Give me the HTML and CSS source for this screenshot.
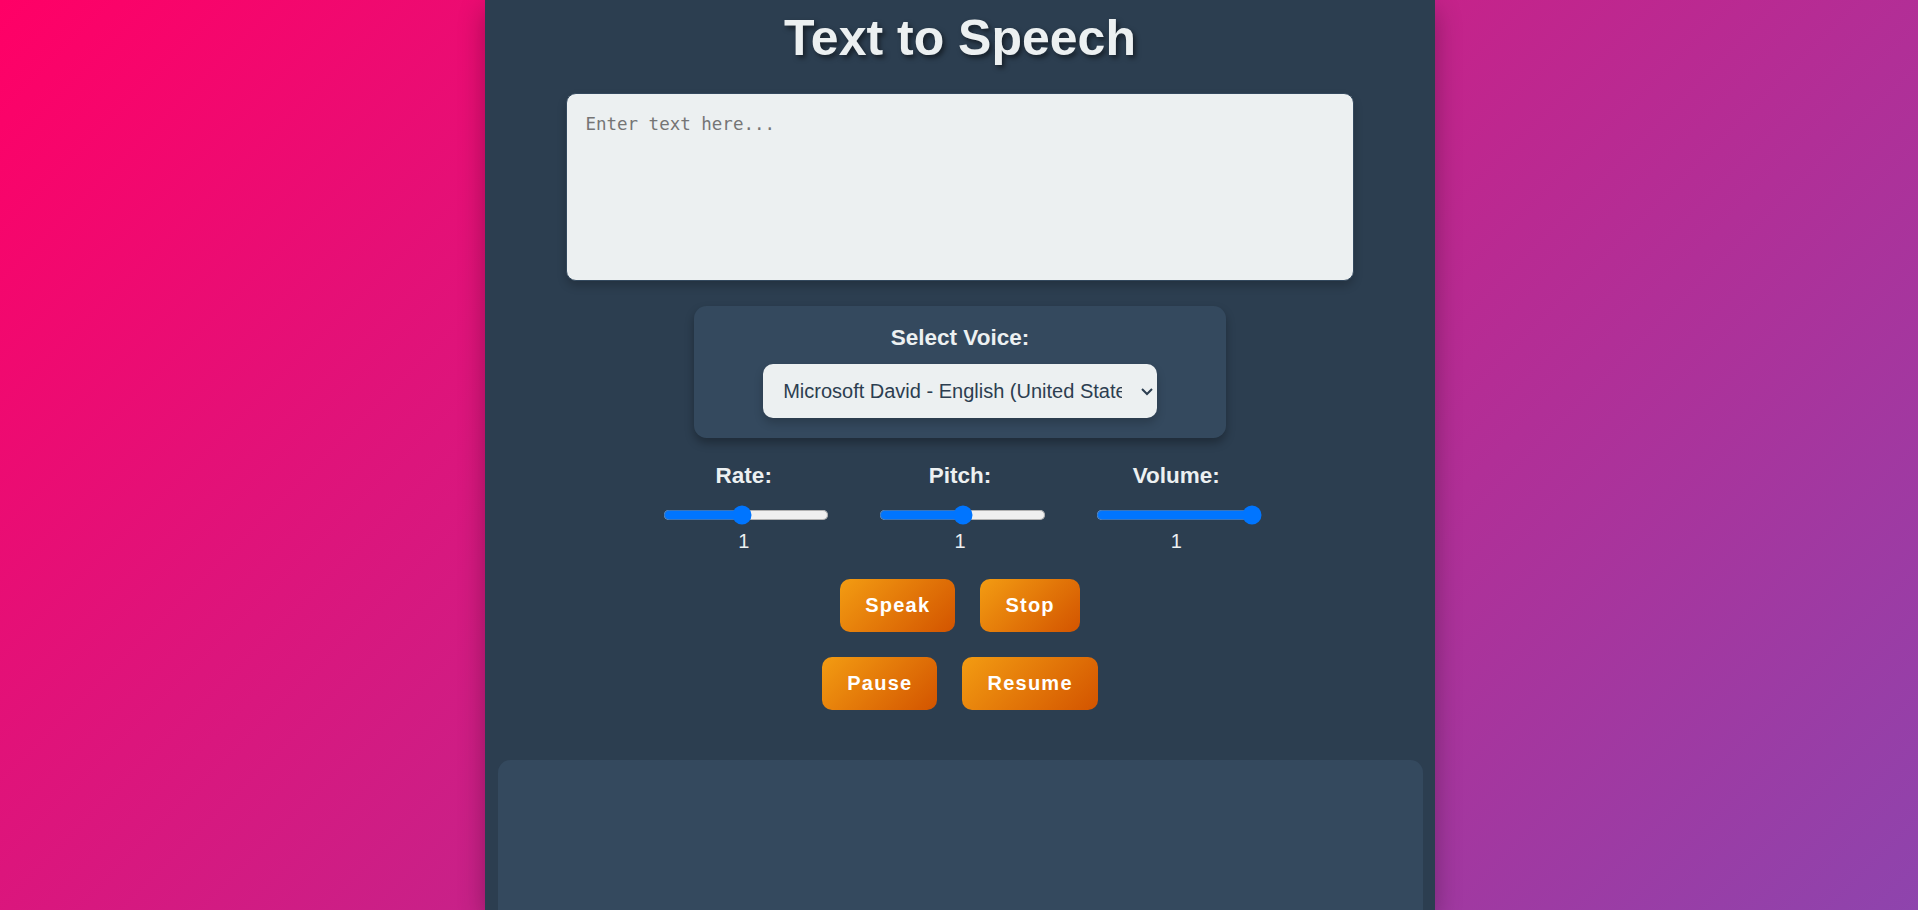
FILE: index.html
```html
<!DOCTYPE html>
<html lang="en">
<head>
  <meta charset="utf-8">
  <title>Text to Speech</title>
  <link rel="stylesheet" href="styles.css">
</head>
<body>
  <main class="container">
    <h1 class="title">Text to Speech</h1>
    <textarea class="text-input" placeholder="Enter text here..." aria-label="Text to speak"></textarea>
    <div class="voice">
      <label class="label" for="voice">Select Voice:</label>
      <select class="voice-select" id="voice">
        <option>Microsoft David - English (United States)</option>
      </select>
    </div>
    <div class="controls">
      <div class="control">
        <label class="label" for="rate">Rate:</label>
        <input class="slider" id="rate" type="range" min="0.1" max="2" step="0.1" value="1">
        <output class="value" for="rate">1</output>
      </div>
      <div class="control">
        <label class="label" for="pitch">Pitch:</label>
        <input class="slider" id="pitch" type="range" min="0" max="2" step="0.1" value="1">
        <output class="value" for="pitch">1</output>
      </div>
      <div class="control">
        <label class="label" for="volume">Volume:</label>
        <input class="slider" id="volume" type="range" min="0" max="1" step="0.1" value="1">
        <output class="value" for="volume">1</output>
      </div>
    </div>
    <div class="buttons">
      <button class="button" type="button">Speak</button>
      <button class="button" type="button">Stop</button>
      <button class="button" type="button">Pause</button>
      <button class="button" type="button">Resume</button>
    </div>
    <section class="output-panel"></section>
  </main>
</body>
</html>
```
FILE: styles.css
```css
* {
  box-sizing: border-box;
}

body {
  display: flex;
  justify-content: center;
  height: 100vh;
  margin: 0;
  padding-left: 2px;
  overflow: hidden;
  background: linear-gradient(135deg, #ff0066, #8e44ad);
  font-family: Arial, "Liberation Sans", sans-serif;
}

.container {
  zoom: 1.25;
  display: flex;
  flex-direction: column;
  align-items: center;
  width: 100%;
  max-width: 760px;
  padding: 8px 10px 0;
  background: #2c3e50;
  color: #ecf0f1;
  box-shadow: 0 8px 20px rgba(0, 0, 0, 0.3);
}

.title {
  margin: 0 0 20px;
  font-size: 40px;
  line-height: 46px;
  text-shadow: 2px 2px 4px rgba(0, 0, 0, 0.5);
}

.text-input {
  display: block;
  flex: none;
  width: 100%;
  max-width: 631px;
  height: 151px;
  padding: 16px 15px;
  border: 1px solid #34495e;
  border-radius: 8px;
  background: #ecf0f1;
  color: #2c3e50;
  font-family: Consolas, "DejaVu Sans Mono", monospace;
  font-size: 14px;
  box-shadow: 0 4px 8px rgba(0, 0, 0, 0.2);
  resize: none;
}

.voice {
  display: flex;
  flex-direction: column;
  align-items: center;
  gap: 10px;
  width: 100%;
  max-width: 426px;
  margin-top: 20px;
  padding: 15px 15px 16px;
  border-radius: 10px;
  background: #34495e;
  box-shadow: 0 4px 8px rgba(0, 0, 0, 0.3);
}

.label {
  font-size: 18px;
  font-weight: bold;
  line-height: 21px;
}

.voice-select {
  width: 100%;
  max-width: 315px;
  padding: 12px;
  border: none;
  border-radius: 8px;
  background: #ecf0f1;
  color: #2c3e50;
  font-family: inherit;
  font-size: 16px;
  line-height: 20px;
  box-shadow: 0 4px 8px rgba(0, 0, 0, 0.2);
}

.controls {
  display: flex;
  justify-content: center;
  gap: 40px;
  margin-top: 20px;
}

.control {
  width: 133px;
  text-align: center;
}

.control .label,
.value {
  display: block;
}

.slider {
  display: block;
  width: 100%;
  height: 16px;
  margin: 13px 2px 4px;
}

.value {
  font-size: 16px;
  line-height: 19px;
}

.buttons {
  display: flex;
  flex-wrap: wrap;
  justify-content: center;
  gap: 20px;
  max-width: 300px;
  margin-top: 20px;
}

.button {
  padding: 12px 20px;
  border: none;
  border-radius: 8px;
  background: linear-gradient(135deg, #f39c12, #d35400);
  color: #fff;
  font-family: inherit;
  font-size: 16px;
  font-weight: bold;
  letter-spacing: 1px;
}

.output-panel {
  flex: 1;
  width: 100%;
  margin-top: 40px;
  border-radius: 10px 10px 0 0;
  background: #34495e;
}
```
